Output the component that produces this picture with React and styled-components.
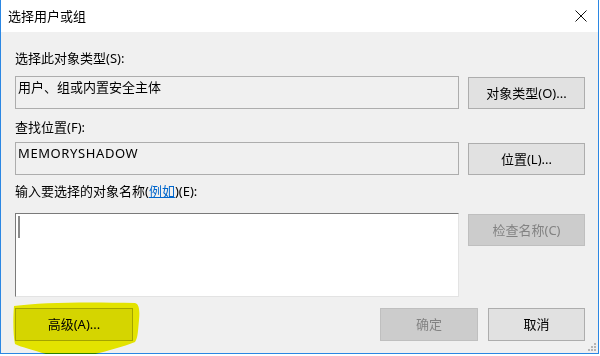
import React from "react";
import styled, { createGlobalStyle } from "styled-components";

const GlobalStyle = createGlobalStyle`
  html, body {
    margin: 0;
    padding: 0;
    background: #ffffff;
  }
  body {
    font-family: "Noto Sans", "Noto Sans CJK SC", sans-serif;
    font-size: 13px;
    color: #000;
  }
`;

const Window = styled.div`
  position: relative;
  width: 599px;
  height: 354px;
  box-sizing: border-box;
  border: 1px solid #2b87e3;
  border-top: none;
  background: #f0f0f0;
  display: flex;
  flex-direction: column;
`;

const TitleBar = styled.div`
  height: 32px;
  flex: none;
  background: #ffffff;
  display: flex;
  align-items: center;
  justify-content: space-between;
  padding: 0 11px 0 7px;
`;

const Title = styled.span`
  font-size: 13px;
  line-height: 17px;
  color: #000;
`;

const CloseIcon = styled.svg`
  width: 12px;
  height: 12px;
  display: block;
`;

const Body = styled.div`
  flex: 1;
  display: flex;
  flex-direction: column;
  padding: 18px 13px 0 14px;
`;

const Label = styled.div`
  font-size: 13px;
  line-height: 17px;
  margin-top: ${(p) => p.$mt || 0}px;
  white-space: nowrap;
`;

const Link = styled.span`
  color: #0066cc;
  text-decoration: underline;
`;

const FieldRow = styled.div`
  display: grid;
  grid-template-columns: 444px 117px;
  column-gap: 9px;
  align-items: start;
  margin-top: ${(p) => p.$mt || 0}px;
`;

const ReadBox = styled.div`
  height: 33px;
  box-sizing: border-box;
  border: 1px solid #adadad;
  background: #f0f0f0;
  padding: 2px 2px;
  line-height: 17px;
  white-space: nowrap;
  letter-spacing: ${(p) => p.$ls || 0}px;
`;

const EditBox = styled.div`
  position: relative;
  height: 84px;
  box-sizing: border-box;
  border-style: solid;
  border-width: 1px;
  border-color: #7a7a7a #e3e3e3 #e3e3e3 #7a7a7a;
  background: #ffffff;
  padding: 2px 2px;
`;

const Caret = styled.span`
  display: block;
  width: 2px;
  height: 22px;
  margin-left: 0;
  background: #8a8a8a;
`;

const Button = styled.button`
  height: ${(p) => p.$h || 32}px;
  width: ${(p) => (p.$w ? `${p.$w}px` : "auto")};
  margin-top: ${(p) => p.$mt || 0}px;
  box-sizing: border-box;
  border: 1px solid ${(p) => (p.disabled ? "#bfbfbf" : "#adadad")};
  background: ${(p) => (p.disabled ? "#cccccc" : "#e1e1e1")};
  color: ${(p) => (p.disabled ? "#838383" : "#000000")};
  font-family: "Noto Sans", "Noto Sans CJK SC", sans-serif;
  font-size: 13px;
  line-height: 17px;
  padding: 0;
  white-space: nowrap;
`;

const BottomRow = styled.div`
  display: flex;
  align-items: center;
  margin-top: 11px;
`;

const Spacer = styled.div`
  flex: 1;
`;

const ButtonGroup = styled.div`
  display: flex;
  gap: 10px;
`;

const Highlight = styled.svg`
  position: absolute;
  left: 0;
  top: 290px;
  width: 150px;
  height: 70px;
  mix-blend-mode: multiply;
  pointer-events: none;
`;

const Grip = styled.svg`
  position: absolute;
  right: 1px;
  bottom: 1px;
  width: 11px;
  height: 11px;
`;

export default function App() {
  return (
    <>
      <GlobalStyle />
      <Window>
        <TitleBar>
          <Title>选择用户或组</Title>
          <CloseIcon viewBox="0 0 12 12">
            <path d="M0.5 0.5 L11.5 11.5 M11.5 0.5 L0.5 11.5" stroke="#111" strokeWidth="1" fill="none" />
          </CloseIcon>
        </TitleBar>
        <Body>
          <Label>选择此对象类型(S):</Label>
          <FieldRow $mt={9}>
            <ReadBox>用户、组或内置安全主体</ReadBox>
            <Button $mt={1}>对象类型(O)...</Button>
          </FieldRow>
          <Label $mt={10}>查找位置(F):</Label>
          <FieldRow $mt={6}>
            <ReadBox $ls={0.6}>MEMORYSHADOW</ReadBox>
            <Button $mt={1}>位置(L)...</Button>
          </FieldRow>
          <Label $mt={8}>
            输入要选择的对象名称(<Link>例如</Link>)(E):
          </Label>
          <FieldRow $mt={13}>
            <EditBox>
              <Caret />
            </EditBox>
            <Button $mt={1} disabled>
              检查名称(C)
            </Button>
          </FieldRow>
          <BottomRow>
            <Button $w={118} $h={33}>高级(A)...</Button>
            <Spacer />
            <ButtonGroup>
              <Button $w={98} $h={33} disabled>
                确定
              </Button>
              <Button $w={97} $h={33}>取消</Button>
            </ButtonGroup>
          </BottomRow>
        </Body>
        <Grip viewBox="0 0 11 11">
          <g fill="#b5b5b5">
            <rect x="8" y="2" width="2" height="2" />
            <rect x="5" y="5" width="2" height="2" />
            <rect x="8" y="5" width="2" height="2" />
            <rect x="2" y="8" width="2" height="2" />
            <rect x="5" y="8" width="2" height="2" />
            <rect x="8" y="8" width="2" height="2" />
          </g>
        </Grip>
        <Highlight viewBox="0 0 150 70">
          <path
            d="M13 16 C40 12 90 12 134 13 C138 14 139 20 138 30 C137 40 137 48 134 52 C120 58 100 62 88 66 C80 70 62 70 54 67 C40 62 22 58 14 54 C12 45 12 28 13 16 Z"
            fill="#f2f200"
          />
        </Highlight>
      </Window>
    </>
  );
}
